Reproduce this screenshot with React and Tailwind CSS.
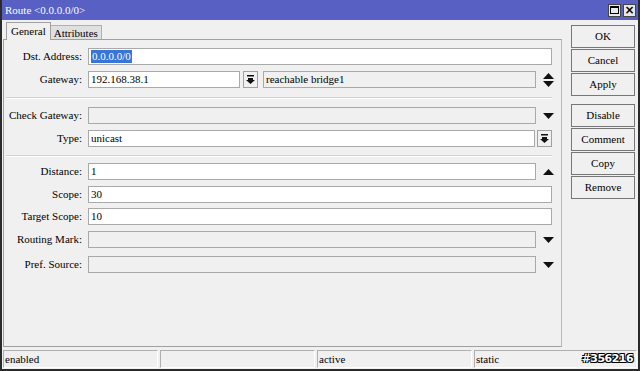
import React from "react";

function Down() {
  return (
    <svg width="11" height="6" viewBox="0 0 11 6">
      <path d="M0 0h11L5.5 6z" fill="#111" />
    </svg>
  );
}

function Up() {
  return (
    <svg width="11" height="6" viewBox="0 0 11 6">
      <path d="M0 6h11L5.5 0z" fill="#111" />
    </svg>
  );
}

function UpDown() {
  return (
    <svg width="11" height="14" viewBox="0 0 11 14">
      <path d="M0 6h11L5.5 0z M0 8h11L5.5 14z" fill="#111" />
    </svg>
  );
}

function DropBtn() {
  return (
    <div className="w-[15px] h-[17px] border border-[#a0a0a0] bg-[#f0f0f0] flex items-center justify-center">
      <svg width="9" height="9" viewBox="0 0 9 9">
        <path d="M1 0h7v1.5H1z M2 3h5v2h2L4.5 9 0 5h2z" fill="#111" />
      </svg>
    </div>
  );
}

function Field({ value, gray, selected, className = "" }) {
  return (
    <div
      className={`h-[17px] border border-[#a9a9a9] flex items-center px-[2px] text-[11px] text-black leading-none ${
        gray ? "bg-[#f0f0f0]" : "bg-white"
      } ${className}`}
    >
      {selected ? <span className="bg-[#3875d7] text-white px-[1px] py-[1px]">{value}</span> : value}
    </div>
  );
}

function Row({ label, children, trail, mt = "mt-[6px]" }) {
  return (
    <div className={`flex items-center h-[17px] ${mt}`}>
      <div className="w-[84px] text-right text-[11px] leading-none pr-[6px] text-black whitespace-nowrap">{label}</div>
      <div className="flex-1 flex items-center">{children}</div>
      <div className="w-[24px] flex items-center justify-center">{trail}</div>
    </div>
  );
}

function Btn({ children }) {
  return (
    <div className="h-[23px] border border-[#777] bg-[#f0f0f0] flex items-center justify-center text-[11px] leading-none text-black">
      {children}
    </div>
  );
}

function Sep({ mt = "mt-[9px]" }) {
  return <div className={`h-[2px] border-t border-[#d0d0d0] border-b border-b-white ml-[2px] mr-[8px] ${mt}`} />;
}

export default function App() {
  return (
    <div className="w-[640px] h-[371px] bg-[#f0f0f0] border-2 border-t-0 border-[#2a2a2a] flex flex-col overflow-hidden font-['Liberation_Serif','DejaVu_Serif',serif]">
      {/* Title bar */}
      <div className="h-[20px] bg-[#5860c4] flex items-center justify-between pl-[3px] pr-[2px]">
        <span className="text-white text-[11px]">Route &lt;0.0.0.0/0&gt;</span>
        <div className="flex gap-[2px]">
          <div className="w-[13px] h-[13px] bg-[#e8e8e8] border border-[#444] flex items-center justify-center">
            <div className="w-[9px] h-[8px] border border-black border-t-2" />
          </div>
          <div className="w-[13px] h-[13px] bg-[#e8e8e8] border border-[#444] flex items-center justify-center text-[12px] font-bold leading-none font-['DejaVu_Sans',sans-serif]">
            ×
          </div>
        </div>
      </div>

      <div className="flex flex-1">
        {/* Left: tabs + panel */}
        <div className="w-[560px] pl-[1px] pt-[2px] flex flex-col">
          <div className="flex items-end h-[18px]">
            <div className="h-[18px] px-[4px] bg-[#f0f0f0] border border-b-0 border-[#a0a0a0] ml-[3px] text-[11px] flex items-center z-10">
              General
            </div>
            <div className="h-[15px] px-[3px] bg-[#e0e0e0] border border-b-0 border-l-0 border-[#b0b0b0] text-[11px] flex items-center">
              Attributes
            </div>
          </div>
          <div className="flex-1 border border-[#a0a0a0] border-r-[#b8b8b8] -mt-px pt-[8px] pr-[1px]">
            <Row label="Dst. Address:" mt="mt-0" trail={null}>
              <Field value="0.0.0.0/0" selected className="flex-1 -mr-[16px]" />
            </Row>
            <Row label="Gateway:" trail={<UpDown />}>
              <Field value="192.168.38.1" className="w-[152px]" />
              <div className="ml-[3px]"><DropBtn /></div>
              <Field value="reachable bridge1" gray className="flex-1 ml-[5px]" />
            </Row>
            <Sep />
            <Row label="Check Gateway:" mt="mt-[8px]" trail={<Down />}>
              <Field value="" gray className="flex-1" />
            </Row>
            <Row label="Type:" trail={null}>
              <Field value="unicast" className="flex-1" />
              <div className="ml-[2px] -mr-[16px]"><DropBtn /></div>
            </Row>
            <Sep mt="mt-[8px]" />
            <Row label="Distance:" mt="mt-[6px]" trail={<Up />}>
              <Field value="1" className="flex-1" />
            </Row>
            <Row label="Scope:" trail={null}>
              <Field value="30" className="flex-1 -mr-[16px]" />
            </Row>
            <Row label="Target Scope:" mt="mt-[5px]" trail={null}>
              <Field value="10" className="flex-1 -mr-[16px]" />
            </Row>
            <Row label="Routing Mark:" trail={<Down />}>
              <Field value="" gray className="flex-1" />
            </Row>
            <Row label="Pref. Source:" mt="mt-[8px]" trail={<Down />}>
              <Field value="" gray className="flex-1" />
            </Row>
          </div>
        </div>

        {/* Right buttons */}
        <div className="flex-1 pl-[9px] pr-[3px] pt-[5px] flex flex-col gap-[1px]">
          <Btn>OK</Btn>
          <Btn>Cancel</Btn>
          <Btn>Apply</Btn>
          <div className="h-[6px]" />
          <Btn>Disable</Btn>
          <Btn>Comment</Btn>
          <Btn>Copy</Btn>
          <Btn>Remove</Btn>
        </div>
      </div>

      {/* Status bar */}
      <div className="h-[22px] flex gap-[2px] px-[1px] pt-[3px] pb-[1px] relative">
        <div className="w-[155px] border border-[#b0b0b0] border-b-white border-r-white text-[11px] pl-[1px] leading-[16px]">enabled</div>
        <div className="w-[155px] border border-[#b0b0b0] border-b-white border-r-white text-[11px] pl-[1px] leading-[16px]"></div>
        <div className="w-[155px] border border-[#b0b0b0] border-b-white border-r-white text-[11px] pl-[1px] leading-[16px]">active</div>
        <div className="flex-1 border border-[#b0b0b0] border-b-white border-r-white text-[11px] pl-[1px] leading-[16px]">static</div>
        <span
          className="absolute right-[5px] bottom-[2px] text-[11px] font-bold text-white tracking-tighter font-['DejaVu_Sans',sans-serif]"
          style={{ textShadow: "1px 1px 0 #000, -1px -1px 0 #000, 1px -1px 0 #000, -1px 1px 0 #000" }}
        >
          #356216
        </span>
      </div>
    </div>
  );
}
